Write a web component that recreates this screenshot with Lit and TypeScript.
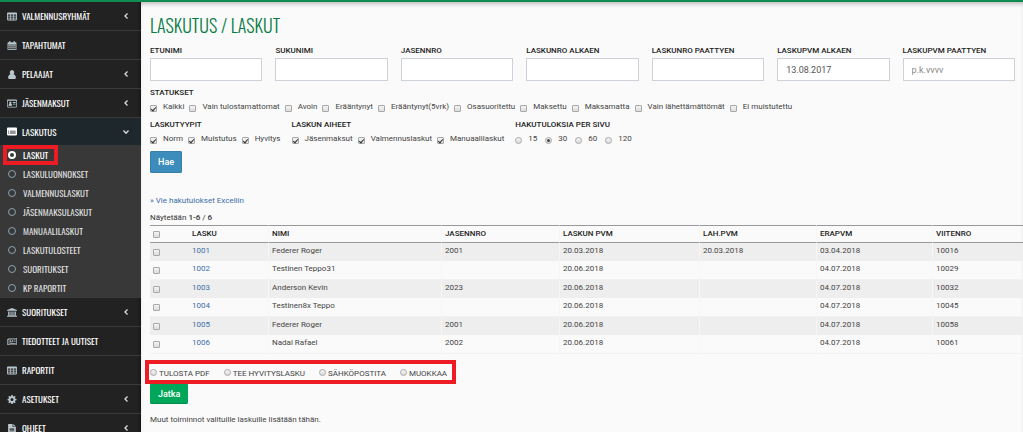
import { LitElement, html, svg, css, nothing } from "lit";
import { customElement, property } from "lit/decorators.js";

const icons: Record<string, unknown> = {
  table: svg`<path fill-rule="evenodd" d="M1.5 1h15A1.500 1.500 0 0 1 18 2.500v11a1.500 1.500 0 0 1-1.500 1.500h-15A1.500 1.500 0 0 1 0 13.500v-11A1.500 1.500 0 0 1 1.500 1zM1.500 4.500v2.300h4V4.500zm5.300 0v2.300h4.200V4.500zm5.500 0v2.300h4.200V4.500zM1.500 8v2.300h4V8zm5.300 0v2.300h4.200V8zm5.500 0v2.300h4.200V8zM1.500 11.400v2.200h4v-2.200zm5.300 0v2.200h4.200v-2.200zm5.500 0v2.200h4.200v-2.200z"/>`,
  calendar: svg`<path fill-rule="evenodd" d="M4 0h2v2h6V0h2v2h2a1 1 0 0 1 1 1v12a1 1 0 0 1-1 1H2a1 1 0 0 1-1-1V3a1 1 0 0 1 1-1h2zM2.300 6v2.200h2.600V6zm3.600 0v2.200h2.600V6zm3.600 0v2.200h2.600V6zm3.600 0v2.200h2.600V6zM2.300 9.200v2.200h2.600V9.200zm3.600 0v2.200h2.600V9.200zm3.600 0v2.200h2.600V9.200zm3.600 0v2.200h2.600V9.200zM2.300 12.400v2.200h2.600v-2.200zm3.600 0v2.200h2.600v-2.200zm3.600 0v2.200h2.600v-2.200zm3.600 0v2.200h2.600v-2.200z"/>`,
  user: svg`<path d="M9 0a4 4.500 0 0 1 2.800 7.700C14.500 8.300 16 10.500 16 14c0 1.200-.8 2-2 2H4c-1.200 0-2-.8-2-2 0-3.500 1.500-5.700 4.200-6.300A4 4.500 0 0 1 9 0z"/>`,
  card: svg`<path fill-rule="evenodd" d="M1.500 1h15A1.500 1.500 0 0 1 18 2.500v11a1.500 1.500 0 0 1-1.500 1.500h-15A1.500 1.500 0 0 1 0 13.500v-11A1.500 1.500 0 0 1 1.500 1zM1.300 3v10.700h15.400V3z"/><path d="M6 4.500a2 2.200 0 0 1 1.400 3.800c1.200.4 1.800 1.400 1.800 3.700H2.800c0-2.300.6-3.300 1.800-3.700A2 2.200 0 0 1 6 4.500zM10.500 5.500h5V7h-5zm0 3h5V10h-5z"/>`,
  list: svg`<path fill-rule="evenodd" d="M1.500 1h15A1.500 1.500 0 0 1 18 2.500v11a1.500 1.500 0 0 1-1.500 1.500h-15A1.500 1.500 0 0 1 0 13.500v-11A1.500 1.500 0 0 1 1.500 1zM2 6.500v1.400h2V6.500zm3.500 0v1.400h10V6.500zM2 10v1.400h2V10zm3.500 0v1.400h10V10z"/>`,
  bank: svg`<path d="M9 0l9 3.600V5H0V3.600zM2 6h2.500v6.500h1.700V6h2v6.500h1.600V6h2v6.500h1.700V6H16v6.500h.8V14H1.200v-1.500H2zM0 14.600h18V16H0z"/>`,
  news: svg`<path fill-rule="evenodd" d="M3 1.500h15v11a2 2 0 0 1-2 2H2a2 2 0 0 1-2-2V4h3zM4.200 2.800v9.700c0 .3 0 .5-.1.800H16c.5 0 .8-.3.800-.8V2.800zM1.200 5.200v7.300c0 1 1.800 1 1.800 0V5.200z"/><path fill-rule="evenodd" d="M5.300 4.200h5v5h-5zm1.300 1.200v2.500h2.500V5.400zM11.300 4.300h4.500v1.200h-4.500zm0 2.300h4.500v1.200h-4.500zM5.300 10.700h10.500v1.200H5.300z"/>`,
  cog: svg`<path fill-rule="evenodd" d="M7.800 0h2.400l.5 2.200 1.300.6 2-1.200L15.500 3.200l-1.200 2 .5 1.400 2.200.4v2.300l-2.200.5-.5 1.300 1.200 2-1.600 1.600-1.900-1.200-1.400.6-.4 2.100H7.800l-.5-2.100-1.300-.6-2 1.200-1.600-1.600 1.200-2-.5-1.300L1 9.300V7l2.100-.4.500-1.400-1.200-2L4 1.600l2 1.200 1.300-.6zM9 5.300a2.800 2.800 0 1 0 0 5.600 2.800 2.800 0 0 0 0-5.600z"/>`,
  file: svg`<path fill-rule="evenodd" d="M2 0h8v5.300h6V16H2zM11.200 0l4.800 4.200h-4.800zM5 7v1.200h8V7zm0 2.400v1.200h8V9.400zm0 2.400V13h8v-1.200z"/>`,
};

interface MenuEntry {
  icon: string;
  label: string;
  state?: "closed" | "open";
  children?: string[];
}

const menu: MenuEntry[] = [
  { icon: "table", label: "VALMENNUSRYHMÄT", state: "closed" },
  { icon: "calendar", label: "TAPAHTUMAT" },
  { icon: "user", label: "PELAAJAT", state: "closed" },
  { icon: "card", label: "JÄSENMAKSUT", state: "closed" },
  {
    icon: "list",
    label: "LASKUTUS",
    state: "open",
    children: ["LASKUT", "LASKULUONNOKSET", "VALMENNUSLASKUT", "JÄSENMAKSULASKUT", "MANUAALILASKUT", "LASKUTULOSTEET", "SUORITUKSET", "KP RAPORTIT"],
  },
  { icon: "bank", label: "SUORITUKSET", state: "closed" },
  { icon: "news", label: "TIEDOTTEET JA UUTISET" },
  { icon: "table", label: "RAPORTIT" },
  { icon: "cog", label: "ASETUKSET", state: "closed" },
  { icon: "file", label: "OHJEET", state: "closed" },
];

@customElement("side-menu")
export class SideMenu extends LitElement {
  static styles = css`
    :host {
      display: block;
      background: #222;
      font: 400 9px/12px Oswald, "Liberation Sans Narrow", Roboto, sans-serif;
    }
    ul { list-style: none; margin: 0; padding: 0; }
    a { display: flex; align-items: center; color: #fff; text-decoration: none; }
    .entry + .entry { border-top: 1px solid #3a3a3a; }
    .top { height: 28px; padding: 0 12px 0 7px; gap: 5px; }
    .open { height: 27px; background: #1e282c; color: #fff; }
    .icon { width: 10px; height: 9px; fill: #b8c7ce; flex: none; }
    .open .icon { fill: #fff; }
    .name { flex: 1; white-space: nowrap; }
    .arrow { width: 6px; height: 6px; fill: none; stroke: #ddd; stroke-width: 1.300; flex: none; }
    .sub { background: #383838; }
    .child { height: 19px; padding-left: 8px; gap: 7px; color: #ddd; white-space: nowrap; position: relative; }
    .ring { box-sizing: border-box; width: 8px; height: 8px; border: 1px solid #8aa4af; border-radius: 50%; flex: none; }
    .current { color: #fff; }
    .current .ring { border: 2px solid #fff; }
    .mark { position: absolute; left: 3px; top: 0; width: 55px; height: 20px; box-sizing: border-box; border: 4px solid #ed1c24; pointer-events: none; z-index: 1; }
  `;

  render() {
    return html`<nav>
      <ul>
        ${menu.map(
          (m) => html`<li class="entry">
            <a href="#" class="top ${m.state === "open" ? "open" : ""}">
              <svg class="icon" viewBox="0 0 18 16" aria-hidden="true">${icons[m.icon]}</svg>
              <span class="name">${m.label}</span>
              ${m.state
                ? html`<svg class="arrow" viewBox="0 0 6 6" aria-hidden="true">
                    ${m.state === "open" ? svg`<path d="M.5 1.500 3 4.200 5.500 1.500"/>` : svg`<path d="M4.500.5 2 3l2.500 2.500"/>`}
                  </svg>`
                : nothing}
            </a>
            ${m.children
              ? html`<ul class="sub">
                  ${m.children.map(
                    (c, i) => html`<li>
                      <a href="#" class="child ${i === 0 ? "current" : ""}">
                        <span class="ring"></span>${c}${i === 0 ? html`<span class="mark"></span>` : nothing}
                      </a>
                    </li>`
                  )}
                </ul>`
              : nothing}
          </li>`
        )}
      </ul>
    </nav>`;
  }
}

const toggleStyles = css`
  input[type="checkbox"],
  input[type="radio"] {
    appearance: none;
    box-sizing: border-box;
    flex: none;
    width: 7px;
    height: 7px;
    margin: 0;
    border: 1px solid #a8a8a8;
    border-radius: 1px;
    background: linear-gradient(#f4f4f4, #dcdcdc);
    display: grid;
    place-items: center;
  }
  input[type="radio"] { border-radius: 50%; }
  input[type="checkbox"]:checked::after {
    content: "";
    width: 2px;
    height: 4px;
    border: solid #333;
    border-width: 0 1px 1px 0;
    transform: rotate(40deg);
  }
  input[type="radio"]:checked::after {
    content: "";
    width: 3px;
    height: 3px;
    border-radius: 50%;
    background: #444;
  }
`;

@customElement("option-group")
export class OptionGroup extends LitElement {
  @property() heading = "";
  @property() type = "checkbox";
  @property({ attribute: false }) options: string[] = [];
  @property({ attribute: false }) selected: string[] = [];

  static styles = [
    toggleStyles,
    css`
      :host { display: block; }
      fieldset { border: 0; margin: 0; padding: 0; min-width: 0; }
      legend { padding: 0; font-weight: 500; color: #222; }
      .options { display: flex; flex-wrap: wrap; gap: 4px 5px; margin-top: 4px; }
      .radio { column-gap: 8px; }
      label { display: flex; align-items: center; gap: 6px; white-space: nowrap; }
      input { position: relative; top: 1px; }
    `,
  ];

  render() {
    return html`<fieldset>
      <legend>${this.heading}</legend>
      <div class="options ${this.type}">
        ${this.options.map(
          (o) => html`<label><input type=${this.type} name="option" .checked=${this.selected.includes(o)} />${o}</label>`
        )}
      </div>
    </fieldset>`;
  }
}

const fields = [
  { id: "etunimi", label: "ETUNIMI" },
  { id: "sukunimi", label: "SUKUNIMI" },
  { id: "jasennro", label: "JASENNRO" },
  { id: "nro-alkaen", label: "LASKUNRO ALKAEN" },
  { id: "nro-paattyen", label: "LASKUNRO PAATTYEN" },
  { id: "pvm-alkaen", label: "LASKUPVM ALKAEN", value: "13.08.2017" },
  { id: "pvm-paattyen", label: "LASKUPVM PAATTYEN", placeholder: "p.k.vvvv" },
];

const statuses = ["Kaikki", "Vain tulostamattomat", "Avoin", "Erääntynyt", "Erääntynyt(5vrk)", "Osasuoritettu", "Maksettu", "Maksamatta", "Vain lähettämättömät", "Ei muistutettu"];
const kinds = ["Norm", "Muistutus", "Hyvitys"];
const topics = ["Jäsenmaksut", "Valmennuslaskut", "Manuaalilaskut"];

const columns = ["LASKU", "NIMI", "JASENNRO", "LASKUN PVM", "LAH.PVM", "ERAPVM", "VIITENRO"];
const rows = [
  ["1001", "Federer Roger", "2001", "20.03.2018", "20.03.2018", "03.04.2018", "10016"],
  ["1002", "Testinen Teppo31", "", "20.06.2018", "", "04.07.2018", "10029"],
  ["1003", "Anderson Kevin", "2023", "20.06.2018", "", "04.07.2018", "10032"],
  ["1004", "Testinen8x Teppo", "", "20.06.2018", "", "04.07.2018", "10045"],
  ["1005", "Federer Roger", "2001", "20.06.2018", "", "04.07.2018", "10058"],
  ["1006", "Nadal Rafael", "2002", "20.06.2018", "", "04.07.2018", "10061"],
];
const actions = ["TULOSTA PDF", "TEE HYVITYSLASKU", "SÄHKÖPOSTITA", "MUOKKAA"];

@customElement("app-root")
export class AppRoot extends LitElement {
  static styles = [
    toggleStyles,
    css`
      :host {
        display: grid;
        grid-template-columns: 141px minmax(0, 1fr);
        height: 100vh;
        overflow: hidden;
        box-sizing: border-box;
        border-top: 2px solid #0f8a50;
        background: #fafafa;
        color: #444;
        font: 8px/10px Roboto, sans-serif;
      }
      side-menu { box-shadow: inset -3px 0 3px -2px #111; }
      main { padding: 10px 0 0 9px; box-shadow: inset 0 4px 4px -2px #bbb; }
      h1 { margin: 0; font: 300 18px/26px Oswald, "Liberation Sans Narrow", Roboto, sans-serif; color: #0a7d46; }
      .search { margin: 8px 8px 0 0; }
      .fields { display: grid; grid-template-columns: repeat(7, minmax(0, 1fr)); gap: 13px; }
      .field { display: grid; gap: 2px; }
      .field label { font-weight: 500; color: #222; white-space: nowrap; }
      .field input {
        box-sizing: border-box;
        width: 100%;
        height: 23px;
        padding: 0 8px;
        border: 1px solid #ccd2d8;
        border-radius: 0;
        background: #fff;
        color: #555;
        font: 9px/12px Roboto, sans-serif;
      }
      .field input::placeholder { color: #888; opacity: 1; }
      .status { margin-top: 7px; }
      .groups { display: flex; flex-wrap: wrap; gap: 11px; margin-top: 8px; }
      button { display: block; border: 0; color: #fff; font: 500 9px/12px Roboto, sans-serif; }
      .find { margin-top: 7px; height: 22px; padding: 0 8px; border-radius: 2px; background: #3c8dbc; box-shadow: inset 0 0 0 1px #367fa9; }
      .export { margin: 23px 0 0; }
      a { color: #3b6ea8; text-decoration: none; }
      .count { margin: 7px 0 2px; color: #333; }
      .count b { font-weight: 500; }
      table { width: 100%; table-layout: fixed; border-collapse: separate; border-spacing: 0; }
      .c-check { width: 39px; }
      .c-lasku { width: 80px; }
      .c-nimi { width: 173px; }
      .c-jasen { width: 118px; }
      .c-pvm { width: 140px; }
      .c-lah { width: 117px; }
      .c-era { width: 116px; }
      .c-viite { width: 90px; }
      th, td { height: 18px; box-sizing: border-box; padding: 0 3px; text-align: left; vertical-align: middle; }
      th { height: 18px; border-top: 1px solid #999; border-bottom: 1px solid #999; color: #222; font-weight: 500; }
      th, td { border-right: 1px solid #f6f6f6; }
      th:first-child, td:first-child, th:last-child, td:last-child { border-right: 0; }
      td { padding-bottom: 2px; }
      .odd td { background: #eee; }
      .even td { height: 19px; border-bottom: 1px solid #f2f2f2; }
      td input[type="checkbox"] { position: relative; top: 1px; }
      .actions { display: flex; flex-wrap: wrap; gap: 14px; position: relative; width: max-content; margin: 15px 0 0; padding: 0; border: 0; }
      .actions label { display: flex; align-items: flex-start; gap: 2px; }
      .mark { position: absolute; inset: -9px -9px -5px -5px; border: 4px solid #ed1c24; pointer-events: none; z-index: 1; }
      .go { margin-top: 4px; height: 21px; padding: 0 8px; border-radius: 2px; background: #00a65a; box-shadow: inset 0 -1px #008d4c; }
      .note { margin: 11px 0 0; }
    `,
  ];

  render() {
    return html`
      <side-menu></side-menu>
      <main>
        <h1>LASKUTUS / LASKUT</h1>
        <form class="search" @submit=${(e: Event) => e.preventDefault()}>
          <div class="fields">
            ${fields.map(
              (f) => html`<div class="field">
                <label for=${f.id}>${f.label}</label>
                <input type="text" id=${f.id} .value=${f.value ?? ""} placeholder=${f.placeholder ?? nothing} />
              </div>`
            )}
          </div>
          <option-group class="status" heading="STATUKSET" .options=${statuses} .selected=${["Kaikki"]}></option-group>
          <div class="groups">
            <option-group heading="LASKUTYYPIT" .options=${kinds} .selected=${kinds}></option-group>
            <option-group heading="LASKUN AIHEET" .options=${topics} .selected=${topics}></option-group>
            <option-group heading="HAKUTULOKSIA PER SIVU" type="radio" .options=${["15", "30", "60", "120"]} .selected=${["30"]}></option-group>
          </div>
          <button class="find" type="submit">Hae</button>
        </form>
        <p class="export"><a href="#">» Vie hakutulokset Exceliin</a></p>
        <p class="count">Näytetään <b>1-6</b> / <b>6</b></p>
        <table>
          <colgroup>
            <col class="c-check" /><col class="c-lasku" /><col class="c-nimi" /><col class="c-jasen" />
            <col class="c-pvm" /><col class="c-lah" /><col class="c-era" /><col class="c-viite" />
          </colgroup>
          <thead>
            <tr>
              <th><input type="checkbox" aria-label="Valitse kaikki" /></th>
              ${columns.map((c) => html`<th scope="col">${c}</th>`)}
            </tr>
          </thead>
          <tbody>
            ${rows.map(
              (r, i) => html`<tr class=${i % 2 ? "even" : "odd"}>
                <td><input type="checkbox" aria-label="Valitse ${r[0]}" /></td>
                ${r.map((v, j) => html`<td>${j === 0 ? html`<a href="#">${v}</a>` : v}</td>`)}
              </tr>`
            )}
          </tbody>
        </table>
        <div class="actions" role="radiogroup" aria-label="Toiminto">
          ${actions.map((a) => html`<label><input type="radio" name="action" />${a}</label>`)}
          <span class="mark"></span>
        </div>
        <button class="go" type="button">Jatka</button>
        <p class="note">Muut toiminnot valituille laskuille lisätään tähän.</p>
      </main>
    `;
  }
}
